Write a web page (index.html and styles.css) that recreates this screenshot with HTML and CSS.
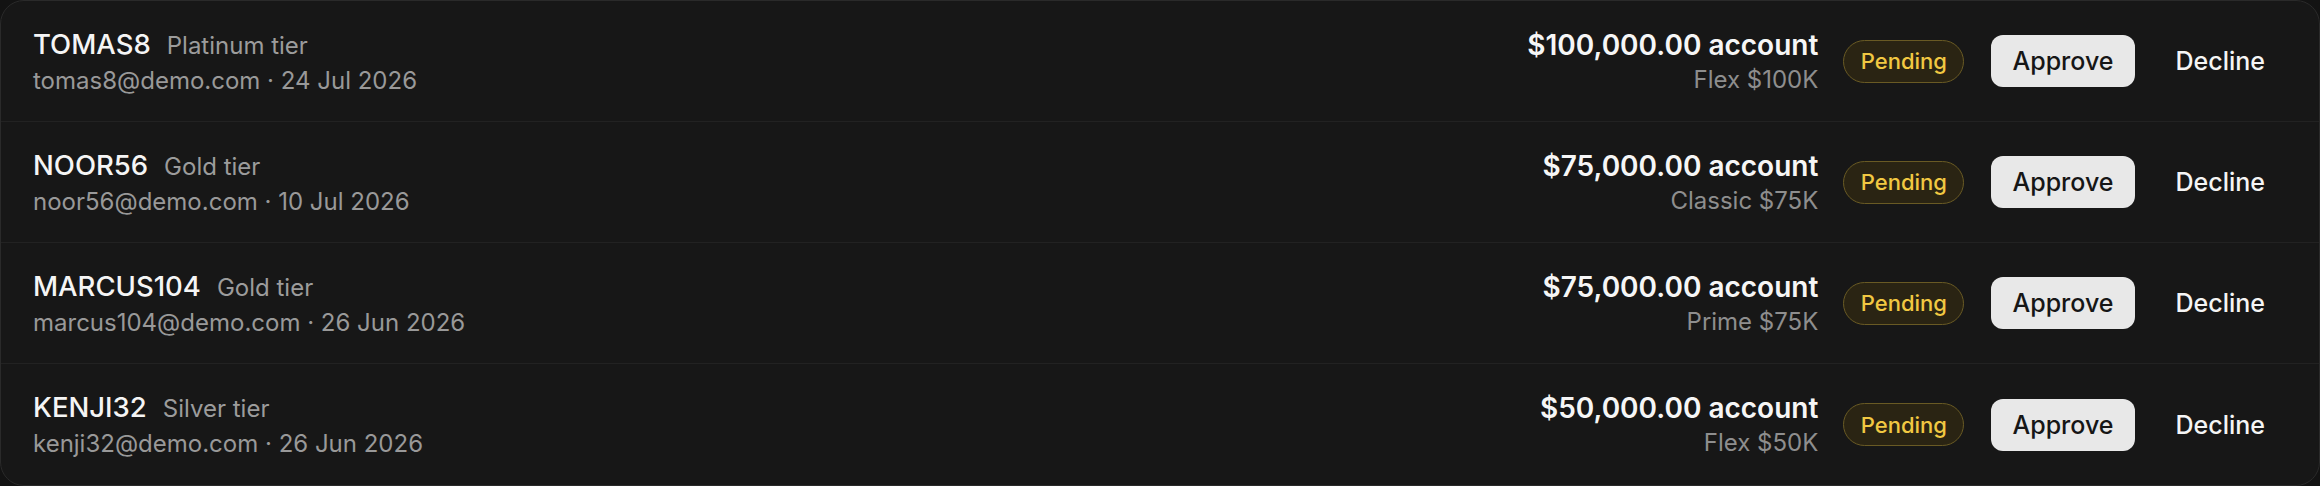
FILE: index.html
```html
<!DOCTYPE html>
<html lang="en">
<head>
<meta charset="utf-8">
<title>Pending accounts</title>
<link rel="stylesheet" href="styles.css">
</head>
<body>
<div class="list">
  <div class="row">
    <div class="who">
      <div class="line1"><span class="name">TOMAS8</span><span class="tier">Platinum tier</span></div>
      <div class="sub">tomas8@demo.com · 24 Jul 2026</div>
    </div>
    <div class="acct">
      <div class="amount">$100,000.00 account</div>
      <div class="plan">Flex $100K</div>
    </div>
    <span class="badge">Pending</span>
    <div class="actions">
      <button class="btn approve">Approve</button>
      <button class="btn decline">Decline</button>
    </div>
  </div>
  <div class="row">
    <div class="who">
      <div class="line1"><span class="name">NOOR56</span><span class="tier">Gold tier</span></div>
      <div class="sub">noor56@demo.com · 10 Jul 2026</div>
    </div>
    <div class="acct">
      <div class="amount">$75,000.00 account</div>
      <div class="plan">Classic $75K</div>
    </div>
    <span class="badge">Pending</span>
    <div class="actions">
      <button class="btn approve">Approve</button>
      <button class="btn decline">Decline</button>
    </div>
  </div>
  <div class="row">
    <div class="who">
      <div class="line1"><span class="name">MARCUS104</span><span class="tier">Gold tier</span></div>
      <div class="sub">marcus104@demo.com · 26 Jun 2026</div>
    </div>
    <div class="acct">
      <div class="amount">$75,000.00 account</div>
      <div class="plan">Prime $75K</div>
    </div>
    <span class="badge">Pending</span>
    <div class="actions">
      <button class="btn approve">Approve</button>
      <button class="btn decline">Decline</button>
    </div>
  </div>
  <div class="row">
    <div class="who">
      <div class="line1"><span class="name">KENJI32</span><span class="tier">Silver tier</span></div>
      <div class="sub">kenji32@demo.com · 26 Jun 2026</div>
    </div>
    <div class="acct">
      <div class="amount">$50,000.00 account</div>
      <div class="plan">Flex $50K</div>
    </div>
    <span class="badge">Pending</span>
    <div class="actions">
      <button class="btn approve">Approve</button>
      <button class="btn decline">Decline</button>
    </div>
  </div>
</div>
</body>
</html>
```
FILE: styles.css
```css
* { box-sizing: border-box; }
html, body {
  margin: 0;
  padding: 0;
  background: #131313;
}
body {
  font-family: Inter, "Noto Sans", "Liberation Sans", sans-serif;
  color: #f4f4f4;
}
.list {
  width: 2320px;
  height: 486px;
  background: #171717;
  border: 1px solid #2a2a2a;
  border-radius: 24px;
  display: grid;
  grid-template-rows: repeat(4, 1fr);
  overflow: hidden;
}
.row {
  display: flex;
  align-items: center;
  padding: 0 33px 0 32px;
  border-bottom: 1px solid #222222;
}
.row:last-child { border-bottom: none; }
.who {
  flex: 1;
  display: flex;
  flex-direction: column;
  gap: 3px;
}
.line1 {
  display: flex;
  align-items: baseline;
  gap: 16px;
  line-height: 34px;
}
.name {
  font-size: 27.5px;
  font-weight: 500;
  color: #f5f5f5;
}
.tier {
  font-size: 24px;
  color: #9c9c9c;
}
.sub {
  font-size: 24px;
  line-height: 30px;
  color: #999999;
}
.acct {
  display: flex;
  flex-direction: column;
  align-items: flex-end;
  gap: 3px;
}
.amount {
  font-size: 28px;
  line-height: 34px;
  font-weight: 600;
  color: #f6f6f6;
}
.plan {
  font-size: 24px;
  line-height: 30px;
  color: #8e8e8e;
}
.badge {
  margin-left: 25px;
  height: 43px;
  display: inline-flex;
  align-items: center;
  padding: 0 16.5px;
  border-radius: 999px;
  border: 1.5px solid #695a24;
  background: #2a2413;
  color: #f1c842;
  font-size: 22px;
  font-weight: 500;
}
.actions {
  margin-left: 27px;
  display: flex;
  align-items: center;
}
.btn {
  font-family: inherit;
  height: 52px;
  padding: 0 21px;
  border-radius: 12px;
  border: none;
  font-size: 25px;
  font-weight: 500;
  cursor: pointer;
}
.approve {
  background: #e8e8e8;
  color: #161616;
}
.decline {
  margin-left: 20px;
  background: transparent;
  color: #f5f5f5;
}
```
